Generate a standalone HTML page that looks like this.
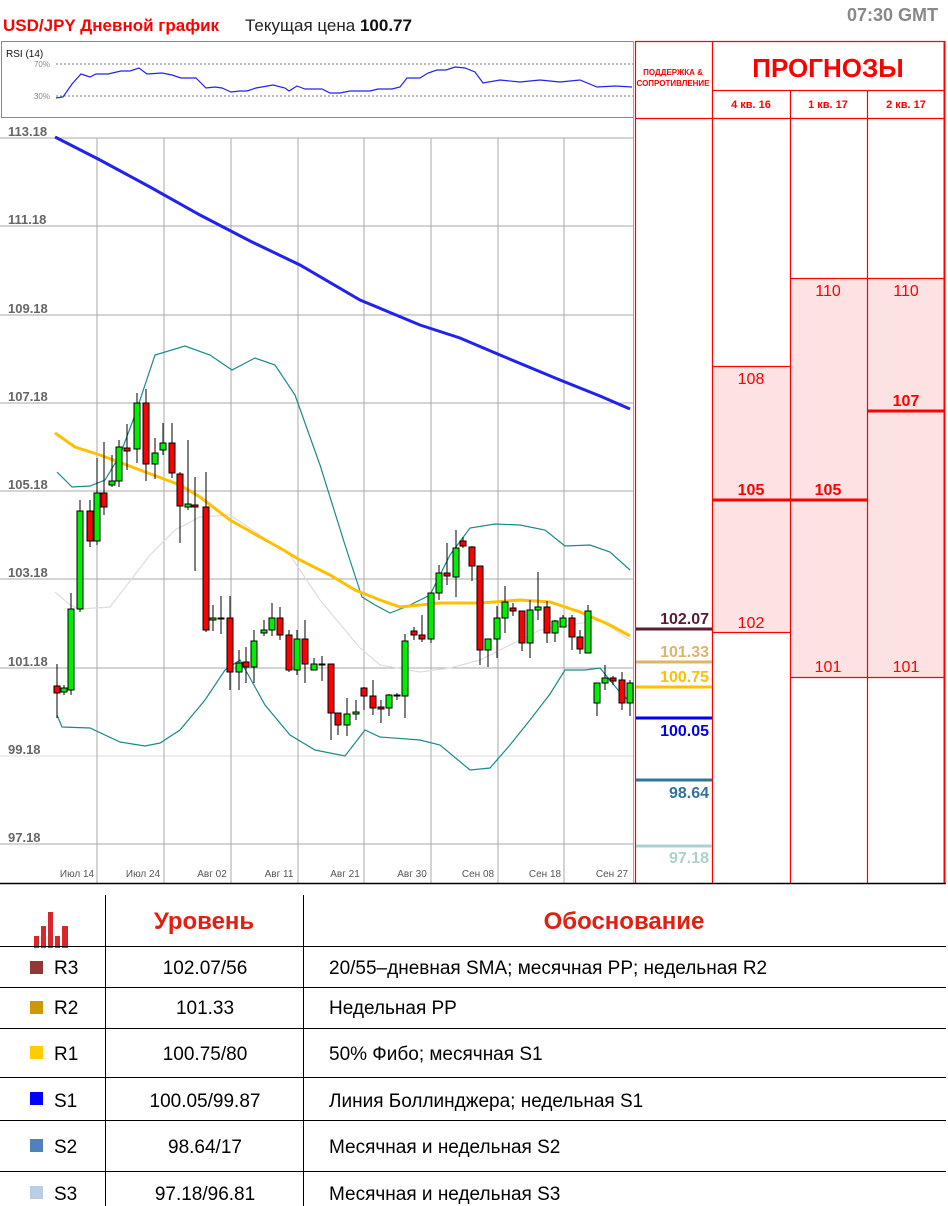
<!DOCTYPE html>
<html><head><meta charset="utf-8"><style>
body{margin:0;width:948px;height:1206px;background:#fff;font-family:"Liberation Sans",sans-serif;overflow:hidden;position:relative}
svg{position:absolute;left:0;top:0}
</style></head><body>
<svg width="948" height="1206" viewBox="0 0 948 1206" xmlns="http://www.w3.org/2000/svg" font-family="Liberation Sans, DejaVu Sans, sans-serif">
<text x="3" y="31" font-size="17" font-weight="bold" fill="#f00">USD/JPY Дневной график</text>
<text x="245" y="31" font-size="17" fill="#222">Текущая цена <tspan font-weight="bold" fill="#111">100.77</tspan></text>
<text x="938" y="21" font-size="18" font-weight="bold" fill="#888" text-anchor="end">07:30 GMT</text>
<!-- RSI -->
<rect x="1.5" y="41.5" width="632" height="76" fill="none" stroke="#888"/>
<text x="6" y="57" font-size="10" fill="#111">RSI (14)</text>
<text x="50" y="67" font-size="8" fill="#888" text-anchor="end">70%</text>
<text x="50" y="99" font-size="8" fill="#888" text-anchor="end">30%</text>
<line x1="56" y1="64" x2="633" y2="64" stroke="#777" stroke-dasharray="2,2"/>
<line x1="56" y1="96" x2="633" y2="96" stroke="#777" stroke-dasharray="2,2"/>
<polyline fill="none" stroke="#2222ee" stroke-width="1.2" points="56,98 63,97 72,84 81,74 90,77 96,74 108,74 121,71 130,71 139,68 147,74 162,73 172,75 181,78 196,78 206,88 215,87 222,88 231,92 240,91 247,91 256,88 273,85 285,88 289,91 297,86 305,89 322,89 330,93 340,93 350,91 370,91 378,89 392,89 400,87 407,78 420,78 428,73 437,70 446,70 455,67 465,68 475,72 483,83 500,80 520,82 540,80 560,82 580,80 597,87 615,86 632,87"/>
<!-- price grid -->
<g stroke="#aaa" stroke-width="1">
<line x1="0" y1="138" x2="633" y2="138"/><line x1="0" y1="226" x2="633" y2="226"/><line x1="0" y1="315" x2="633" y2="315"/><line x1="0" y1="403" x2="633" y2="403"/><line x1="0" y1="491" x2="633" y2="491"/><line x1="0" y1="579" x2="633" y2="579"/><line x1="0" y1="668" x2="633" y2="668"/><line x1="0" y1="756" x2="633" y2="756" stroke="#ddd"/><line x1="0" y1="844" x2="633" y2="844"/>
<line x1="97" y1="138" x2="97" y2="883"/><line x1="164" y1="138" x2="164" y2="883"/><line x1="231" y1="138" x2="231" y2="883"/><line x1="298" y1="138" x2="298" y2="883"/><line x1="364" y1="138" x2="364" y2="883"/><line x1="431" y1="138" x2="431" y2="883"/><line x1="498" y1="138" x2="498" y2="883"/><line x1="564" y1="138" x2="564" y2="883"/>
<line x1="633.5" y1="41" x2="633.5" y2="883"/>
</g>
<g font-size="13" font-weight="bold" fill="#666">
<text x="8" y="136">113.18</text><text x="8" y="224">111.18</text><text x="8" y="313">109.18</text><text x="8" y="401">107.18</text><text x="8" y="489">105.18</text><text x="8" y="577">103.18</text><text x="8" y="666">101.18</text><text x="8" y="754">99.18</text><text x="8" y="842">97.18</text>
</g>
<g font-size="10" fill="#555" text-anchor="middle">
<text x="77" y="877">Июл 14</text><text x="143" y="877">Июл 24</text><text x="212" y="877">Авг 02</text><text x="279" y="877">Авг 11</text><text x="345" y="877">Авг 21</text><text x="412" y="877">Авг 30</text><text x="478" y="877">Сен 08</text><text x="545" y="877">Сен 18</text><text x="612" y="877">Сен 27</text>
</g>
<!-- indicator lines -->
<polyline fill="none" stroke="#ddd" stroke-width="1.2" points="55,592 70,605 80,609 110,607 150,555 175,530 200,517 230,515 260,535 290,555 320,600 360,648 380,665 420,672 450,668 480,660 510,645 540,630 570,625 600,620 630,640"/>
<polyline fill="none" stroke="#1a8a8a" stroke-width="1.2" points="57,472 72,487 90,486 105,480 120,455 135,415 155,355 185,346 210,355 232,370 255,358 275,365 295,395 320,465 345,545 362,597 375,605 390,613 408,606 430,595 450,555 470,528 495,524 520,525 545,530 565,546 590,545 610,552 630,570"/>
<polyline fill="none" stroke="#1a8a8a" stroke-width="1.2" points="57,715 62,727 90,728 120,742 145,746 160,743 180,730 205,700 225,670 240,660 265,705 290,735 315,750 345,756 365,730 380,737 420,740 440,745 470,770 490,768 510,745 530,720 550,694 565,670 585,670 600,668 618,690 630,702"/>
<polyline fill="none" stroke="#2222ee" stroke-width="3" points="55,137 100,160 150,187 200,215 250,241 300,265 360,300 420,325 460,338 500,355 560,380 600,396 630,409"/>
<polyline fill="none" stroke="#ffc000" stroke-width="3" points="55,433 75,447 100,455 140,470 180,485 200,497 230,520 260,537 280,548 300,560 330,575 355,590 380,600 400,607 440,603 480,603 520,600 550,602 580,612 610,625 630,636"/>
<!-- candles -->
<g stroke="#000" stroke-width="1">
<path d="M57 664V718M64 685V695M71 593V695M80 500V612M90 500V547M97 458V545M104 442V515M112 455V487M119 440V487M127 424V470M137 393V463M146 389V481M155 438V479M163 423V455M172 423V478M180 472V543M188 440V510M195 477V571M206 472V632M213 605V631M221 596V634M230 596V690M239 650V690M246 647V683M254 630V683M264 620V636M272 603V636M280 607V640M289 630V672M297 630V675M305 620V683M314 658V670M322 656V681M331 664V740M338 713V735M347 698V736M356 700V720M364 687V710M373 680V715M381 700V723M389 694V716M397 693V700M405 634V718M414 627V640M422 615V642M431 593V643M439 565V600M447 543V585M456 530V597M463 537V548M472 546V581M480 566V665M488 639V667M497 606V658M505 586V633M513 603V616M522 611V651M530 600V658M538 572V620M547 601V643M555 620V642M563 615V627M572 615V650M580 630V654M588 605V653M597 683V716M605 665V690M613 676V685M622 672V710M630 680V716"/>
<g fill="#ff0000">
<rect x="54" y="686" width="6" height="7"/><rect x="87" y="511" width="6" height="30"/><rect x="101" y="493" width="6" height="14"/><rect x="124" y="448" width="6" height="3"/><rect x="143" y="403" width="6" height="61"/><rect x="169" y="443" width="6" height="30"/><rect x="177" y="474" width="6" height="32"/><rect x="192" y="505" width="6" height="2"/><rect x="203" y="507" width="6" height="123"/><rect x="218" y="618" width="6" height="1"/><rect x="227" y="618" width="6" height="54"/><rect x="243" y="662" width="6" height="5"/><rect x="277" y="618" width="6" height="17"/><rect x="286" y="635" width="6" height="35"/><rect x="302" y="639" width="6" height="25"/><rect x="319" y="664" width="6" height="1"/><rect x="328" y="664" width="6" height="49"/><rect x="335" y="713" width="6" height="12"/><rect x="361" y="688" width="6" height="8"/><rect x="370" y="696" width="6" height="12"/><rect x="378" y="707" width="6" height="2"/><rect x="411" y="631" width="6" height="4"/><rect x="419" y="635" width="6" height="4"/><rect x="444" y="573" width="6" height="3"/><rect x="460" y="541" width="6" height="5"/><rect x="469" y="547" width="6" height="19"/><rect x="477" y="566" width="6" height="84"/><rect x="510" y="608" width="6" height="3"/><rect x="519" y="611" width="6" height="32"/><rect x="544" y="607" width="6" height="26"/><rect x="569" y="618" width="6" height="19"/><rect x="577" y="637" width="6" height="12"/><rect x="610" y="678" width="6" height="3"/><rect x="619" y="680" width="6" height="23"/>
</g>
<g fill="#00ee00">
<rect x="61" y="688" width="6" height="4"/><rect x="68" y="609" width="6" height="81"/><rect x="77" y="511" width="6" height="98"/><rect x="94" y="493" width="6" height="48"/><rect x="109" y="481" width="6" height="4"/><rect x="116" y="447" width="6" height="34"/><rect x="134" y="403" width="6" height="46"/><rect x="152" y="453" width="6" height="11"/><rect x="160" y="443" width="6" height="7"/><rect x="185" y="504" width="6" height="3"/><rect x="210" y="618" width="6" height="2"/><rect x="236" y="663" width="6" height="9"/><rect x="251" y="641" width="6" height="26"/><rect x="261" y="630" width="6" height="3"/><rect x="269" y="618" width="6" height="12"/><rect x="294" y="639" width="6" height="31"/><rect x="311" y="664" width="6" height="6"/><rect x="344" y="714" width="6" height="11"/><rect x="353" y="712" width="6" height="2"/><rect x="386" y="695" width="6" height="13"/><rect x="394" y="695" width="6" height="1"/><rect x="402" y="641" width="6" height="55"/><rect x="428" y="593" width="6" height="46"/><rect x="436" y="573" width="6" height="20"/><rect x="453" y="548" width="6" height="29"/><rect x="485" y="639" width="6" height="11"/><rect x="494" y="618" width="6" height="21"/><rect x="502" y="602" width="6" height="16"/><rect x="527" y="610" width="6" height="33"/><rect x="535" y="607" width="6" height="3"/><rect x="552" y="621" width="6" height="12"/><rect x="560" y="618" width="6" height="9"/><rect x="585" y="611" width="6" height="42"/><rect x="594" y="683" width="6" height="20"/><rect x="602" y="678" width="6" height="5"/><rect x="627" y="683" width="6" height="20"/>
</g>
</g>
<!-- forecast panel -->
<rect x="713" y="366" width="77" height="266" fill="#fde2e4"/>
<rect x="790" y="278" width="77" height="399" fill="#fde2e4"/>
<rect x="867" y="278" width="78" height="399" fill="#fde2e4"/>
<g stroke="#f00" stroke-width="1.2">
<line x1="635" y1="41.5" x2="945" y2="41.5"/>
<line x1="712" y1="90.5" x2="945" y2="90.5"/>
<line x1="635" y1="118.5" x2="945" y2="118.5"/>
<line x1="635.5" y1="41" x2="635.5" y2="883"/>
<line x1="712.5" y1="41" x2="712.5" y2="883"/>
<line x1="790.5" y1="90" x2="790.5" y2="883"/>
<line x1="867.5" y1="90" x2="867.5" y2="883"/>
<line x1="944.5" y1="41" x2="944.5" y2="883" stroke-width="2"/>
<line x1="712" y1="366.5" x2="790" y2="366.5"/>
<line x1="712" y1="632.5" x2="790" y2="632.5"/>
<line x1="790" y1="278.5" x2="945" y2="278.5"/>
<line x1="790" y1="677.5" x2="945" y2="677.5"/>
<line x1="712" y1="500" x2="867" y2="500" stroke-width="3"/>
<line x1="867" y1="411" x2="945" y2="411" stroke-width="3"/>
</g>
<text x="673" y="75" font-size="8" font-weight="bold" fill="#f00" text-anchor="middle">ПОДДЕРЖКА &amp;</text>
<text x="673" y="86" font-size="8" font-weight="bold" fill="#f00" text-anchor="middle">СОПРОТИВЛЕНИЕ</text>
<text x="828" y="77" font-size="26" font-weight="bold" fill="#f00" text-anchor="middle">ПРОГНОЗЫ</text>
<g font-size="11" font-weight="bold" fill="#f00" text-anchor="middle">
<text x="751" y="108">4 кв. 16</text><text x="828" y="108">1 кв. 17</text><text x="906" y="108">2 кв. 17</text>
</g>
<g font-size="16" fill="#f00" text-anchor="middle">
<text x="751" y="384">108</text><text x="751" y="628">102</text>
<text x="828" y="296">110</text><text x="906" y="296">110</text>
<text x="828" y="672">101</text><text x="906" y="672">101</text>
<text x="751" y="495" font-weight="bold">105</text><text x="828" y="495" font-weight="bold">105</text><text x="906" y="406" font-weight="bold">107</text>
</g>
<!-- S/R -->
<g stroke-width="3">
<line x1="636" y1="629" x2="712" y2="629" stroke="#5c1a33"/>
<line x1="636" y1="662" x2="712" y2="662" stroke="#dab56a"/>
<line x1="636" y1="687" x2="712" y2="687" stroke="#ffc000"/>
<line x1="636" y1="718" x2="712" y2="718" stroke="#0000ee"/>
<line x1="636" y1="780" x2="712" y2="780" stroke="#31739b"/>
<line x1="636" y1="846" x2="712" y2="846" stroke="#a9d1d0"/>
</g>
<g font-size="16" font-weight="bold" text-anchor="end">
<text x="709" y="624" fill="#5c1a33">102.07</text>
<text x="709" y="657" fill="#dab56a">101.33</text>
<text x="709" y="682" fill="#ffc000">100.75</text>
<text x="709" y="736" fill="#0000ee">100.05</text>
<text x="709" y="798" fill="#31739b">98.64</text>
<text x="709" y="863" fill="#a9d1d0">97.18</text>
</g>
<line x1="0" y1="883.5" x2="946" y2="883.5" stroke="#000" stroke-width="1.5"/>
<!-- table -->
<g fill="#d9262b">
<rect x="34" y="936" width="5" height="12"/><rect x="41" y="926" width="5" height="22"/><rect x="48" y="912" width="5" height="36"/><rect x="55" y="936" width="5" height="12"/><rect x="62" y="926" width="6" height="22"/>
</g>
<g stroke="#000" stroke-width="1">
<line x1="105.5" y1="895" x2="105.5" y2="1206"/><line x1="303.5" y1="895" x2="303.5" y2="1206"/>
<line x1="0" y1="946.5" x2="946" y2="946.5"/><line x1="0" y1="987.5" x2="946" y2="987.5"/><line x1="0" y1="1028.5" x2="946" y2="1028.5"/><line x1="0" y1="1077.5" x2="946" y2="1077.5"/><line x1="0" y1="1120.5" x2="946" y2="1120.5"/><line x1="0" y1="1171.5" x2="946" y2="1171.5"/>
</g>
<text x="204" y="929" font-size="24" font-weight="bold" fill="#e02010" text-anchor="middle">Уровень</text>
<text x="624" y="929" font-size="24" font-weight="bold" fill="#e02010" text-anchor="middle">Обоснование</text>
<rect x="30" y="961" width="13" height="13" fill="#953735"/>
<rect x="30" y="1001" width="13" height="13" fill="#cc9900"/>
<rect x="30" y="1046" width="13" height="13" fill="#ffcc00"/>
<rect x="30" y="1092" width="13" height="13" fill="#0000ff"/>
<rect x="30" y="1139" width="13" height="13" fill="#4f81bd"/>
<rect x="30" y="1186" width="13" height="13" fill="#b9cde5"/>
<g font-size="19" fill="#000">
<text x="54" y="974">R3</text><text x="54" y="1014">R2</text><text x="54" y="1060">R1</text><text x="54" y="1107">S1</text><text x="54" y="1153">S2</text><text x="54" y="1200">S3</text>
<g text-anchor="middle">
<text x="205" y="974">102.07/56</text><text x="205" y="1014">101.33</text><text x="205" y="1060">100.75/80</text><text x="205" y="1107">100.05/99.87</text><text x="205" y="1153">98.64/17</text><text x="205" y="1200">97.18/96.81</text>
</g>
<text x="329" y="974">20/55–дневная SMA; месячная PP; недельная R2</text>
<text x="329" y="1014">Недельная PP</text>
<text x="329" y="1060">50% Фибо; месячная S1</text>
<text x="329" y="1107">Линия Боллинджера; недельная S1</text>
<text x="329" y="1153">Месячная и недельная S2</text>
<text x="329" y="1200">Месячная и недельная S3</text>
</g>
</svg>
</body></html>
